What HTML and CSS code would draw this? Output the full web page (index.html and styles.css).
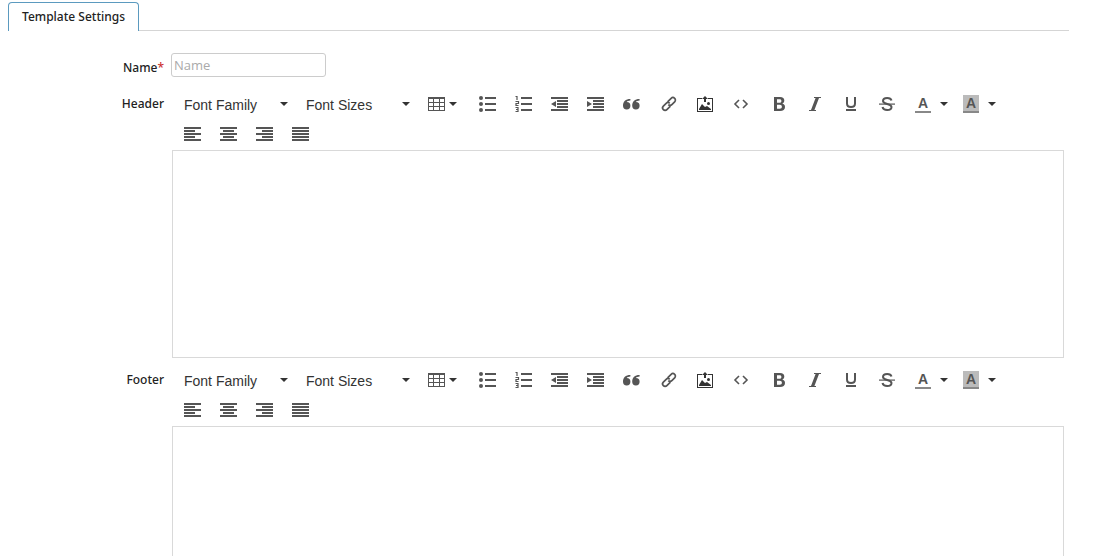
FILE: index.html
```html
<!DOCTYPE html>
<html lang="en">
<head>
    <meta charset="UTF-8">
    <meta name="viewport" content="width=device-width, initial-scale=1.0">
    <title>Template Settings</title>
    <link rel="stylesheet" href="styles.css">
</head>
<body>
    <!-- Toolbar icons -->
    <svg class="sprite" aria-hidden="true">
        <symbol id="i-table" viewBox="0 0 16 16"><path fill-rule="evenodd" d="M0 1h17v14H0zM1 3v3h4V3zm5 0v3h5V3zm6 0v3h4V3zM1 7v3h4V7zm5 0v3h5V7zm6 0v3h4V7zM1 11v3h4v-3zm5 0v3h5v-3zm6 0v3h4v-3z"/></symbol>
        <symbol id="i-bullist" viewBox="0 0 16 16"><circle cx="2" cy="2" r="2"/><circle cx="2" cy="8" r="2"/><circle cx="2" cy="14" r="2"/><path d="M6 1h11v2H6zM6 7h11v2H6zM6 13h11v2H6z"/></symbol>
        <symbol id="i-numlist" viewBox="0 0 16 16"><path d="M6 1h11v2H6zM6 7h11v2H6zM6 13h11v2H6z"/><path d="M.5 .5H2V4M.5 5.500h3v2H1v2h2.500M.5 11.500H3v4H.5M1 13.500h2" fill="none" stroke="currentColor" stroke-width="1.200"/></symbol>
        <symbol id="i-outdent" viewBox="0 0 16 16"><path d="M0 1h17v2H0zM6 4h11v2H6zM6 7h11v2H6zM6 10h11v2H6zM0 13h17v2H0zM5 5v6L0 8z"/></symbol>
        <symbol id="i-indent" viewBox="0 0 16 16"><path d="M0 1h17v2H0zM6 4h11v2H6zM6 7h11v2H6zM6 10h11v2H6zM0 13h17v2H0zM0 5v6l5-3z"/></symbol>
        <symbol id="i-quote" viewBox="0 0 16 16"><path d="M3.700 6A3.700 3.700 0 1 1 0 9.700C0 5.600 2.500 3 7.400 3v1.600C5.400 4.700 4.400 5.200 3.700 6zM12.900 6a3.700 3.700 0 1 1-3.700 3.700C9.200 5.600 11.700 3 16.600 3v1.600c-2 .1-3 .6-3.700 1.400z"/></symbol>
        <symbol id="i-link" viewBox="0 0 16 16"><g fill="none" stroke="currentColor" stroke-width="1.700" transform="rotate(-45 8 8)"><path d="M7.500 10.500h-5a2.500 2.500 0 0 1 0-5h4a2.500 2.500 0 0 1 2.500 2.500"/><path d="M8.500 5.500h5a2.500 2.500 0 0 1 0 5h-4a2.500 2.500 0 0 1-2.500-2.500"/></g></symbol>
        <symbol id="i-image" viewBox="0 0 16 16"><path fill="#333" d="M5 2H0v14h16V2h-5v1h4v12H1V3h4zM8 0L5 3h2v3h2V3h2zM2 14v-1l3-5 3 3 2-1 4 3v1z"/><circle cx="11.500" cy="7.500" r="1.500" fill="#333"/></symbol>
        <symbol id="i-code" viewBox="0 0 16 16"><path d="M6 4L2 8l4 4M10 4l4 4-4 4" fill="none" stroke="currentColor" stroke-width="1.600"/></symbol>
        <symbol id="i-bold" viewBox="0 0 16 16"><path fill-rule="evenodd" d="M3 1h6c3 0 4.300 1.500 4.300 3.500 0 1.500-.8 2.600-2 3.100 1.600.4 2.700 1.500 2.700 3.300C14 13.500 12.200 15 9 15H3zM6 3.200v3.500h2.500c1.300 0 1.900-.6 1.900-1.800s-.6-1.700-1.900-1.700zm0 5.500v4.100h2.700c1.500 0 2.200-.7 2.200-2s-.7-2.100-2.200-2.100z"/></symbol>
        <symbol id="i-italic" viewBox="0 0 16 16"><path d="M14 1v1h-2L7.400 14H9v1H2v-1h2L8.600 2H7V1z"/></symbol>
        <symbol id="i-underline" viewBox="0 0 16 16"><path d="M4 1v6.500C4 9.500 5.500 11 8 11s4-1.500 4-3.500V1" fill="none" stroke="currentColor" stroke-width="2"/><path d="M3 13h10v2H3z"/></symbol>
        <symbol id="i-strike" viewBox="0 0 16 16"><path d="M12.500 4.500C12 2.800 10.500 2 8.200 2 5.600 2 4 3.200 4 5c0 3.500 8.500 2.500 8.500 6 0 1.800-1.700 3-4.300 3-2.500 0-4.200-1-4.700-3" fill="none" stroke="currentColor" stroke-width="2"/><path d="M0 7.500h16v1.200H0z"/></symbol>
        <symbol id="i-left" viewBox="0 0 16 16"><path d="M0 1h17v2H0zM0 4h11v2H0zM0 7h17v2H0zM0 10h11v2H0zM0 13h17v2H0z"/></symbol>
        <symbol id="i-center" viewBox="0 0 16 16"><path d="M0 1h17v2H0zM3 4h11v2H3zM0 7h17v2H0zM3 10h11v2H3zM0 13h17v2H0z"/></symbol>
        <symbol id="i-right" viewBox="0 0 16 16"><path d="M0 1h17v2H0zM6 4h11v2H6zM0 7h17v2H0zM6 10h11v2H6zM0 13h17v2H0z"/></symbol>
        <symbol id="i-justify" viewBox="0 0 16 16"><path d="M0 1h17v2H0zM0 4h17v2H0zM0 7h17v2H0zM0 10h17v2H0zM0 13h17v2H0z"/></symbol>
    </svg>

    <nav class="tabs">
        <a class="tab" href="#settings">Template Settings</a>
    </nav>

    <form class="settings" id="settings">
        <div class="row name-row">
            <label class="row-label" for="name">Name<span class="required">*</span></label>
            <input class="name-input" type="text" id="name" placeholder="Name">
        </div>

        <div class="row">
            <label class="row-label" for="header">Header</label>
            <div class="editor">
                <div class="toolbar"></div>
                <textarea class="content" id="header"></textarea>
            </div>
        </div>

        <div class="row">
            <label class="row-label" for="footer">Footer</label>
            <div class="editor">
                <div class="toolbar"></div>
                <textarea class="content" id="footer"></textarea>
            </div>
        </div>
    </form>

    <script src="editor.js"></script>
</body>
</html>
```
FILE: styles.css
```css
* {
    box-sizing: border-box;
}
body {
    margin: 0 28px 0 8px;
    background: #fff;
    color: #222;
    font-family: "Noto Sans", "Open Sans", sans-serif;
    font-size: 12px;
    line-height: 18px;
}
.sprite {
    display: none;
}
/* Tabs */
.tabs {
    display: flex;
    margin-top: 2px;
    border-bottom: 1px solid #d5d5d5;
}
.tab {
    margin-bottom: -1px;
    padding: 5px 13px;
    border: 1px solid #5b9abf;
    border-bottom: 0;
    border-radius: 4px 4px 0 0;
    background: #fff;
    color: #222;
    font-weight: 500;
    text-decoration: none;
}
/* Form rows */
.settings {
    margin-right: 5px;
    padding-top: 22px;
}
.row {
    display: grid;
    grid-template-columns: 156px minmax(0, 1fr);
    column-gap: 8px;
}
.row-label {
    padding-top: 6px;
    font-weight: 500;
    text-align: right;
}
.required {
    color: #c33;
}
.name-row {
    column-gap: 7px;
    margin-bottom: 12px;
}
.name-input {
    width: 155px;
    height: 24px;
    padding: 0 2px;
    border: 1px solid #ccc;
    border-radius: 3px;
    font-family: "Open Sans", "Noto Sans", sans-serif;
    font-size: 13px;
}
.name-input::placeholder {
    color: #aaa;
}
/* Editor */
.editor {
    margin-bottom: 7px;
}
.toolbar {
    display: flex;
    flex-wrap: wrap;
    column-gap: 2px;
    padding: 0 2px 1px;
}
.group {
    display: flex;
}
.picker {
    display: flex;
    align-items: center;
    width: 122px;
    height: 30px;
}
.picker select {
    flex: 1;
    width: 100%;
    height: 30px;
    margin-right: -20px;
    padding: 2px 20px 0 10px;
    border: 0;
    background: none;
    color: #333;
    font-family: "Liberation Sans", Arial, sans-serif;
    font-size: 14px;
    appearance: none;
}
.btn {
    display: flex;
    align-items: center;
    height: 30px;
    padding: 0 10px;
    border: 0;
    background: none;
    color: #555;
    cursor: pointer;
}
.btn:hover {
    background: #eee;
}
.icon {
    width: 16px;
    height: 16px;
    fill: currentColor;
    overflow: visible;
}
.icon use,
symbol {
    overflow: visible;
}
.caret {
    border: 4px solid transparent;
    border-top-color: #333;
    border-bottom: 0;
    pointer-events: none;
}
.picker .caret {
    margin-right: 8px;
}
.menu .caret {
    margin-left: 5px;
}
.color {
    width: 48px;
    padding-right: 0;
}
.color .caret {
    margin-left: 9px;
}
.letter {
    width: 16px;
    height: 18px;
    border-bottom: 2px solid #888;
    font: bold 14px/16px "Liberation Sans", Arial, sans-serif;
    text-align: center;
}
.backcolor .letter {
    background: #bbb;
}
.content {
    display: block;
    width: 100%;
    height: 208px;
    padding: 8px;
    border: 1px solid #d9d9d9;
    outline: 0;
    resize: none;
}
```
FILE: editor.js
```js
// Each group wraps to the next line as one piece
const groups = [
    ["bullist", "numlist", "outdent", "indent", "quote"],
    ["link", "image", "code"],
    ["bold", "italic", "underline", "strike"],
    ["left", "center", "right", "justify"]
];

const caret = '<span class="caret"></span>';

function icon(name) {
    return `<svg class="icon" aria-hidden="true"><use href="#i-${name}"/></svg>`;
}

function button(name) {
    return `<button class="btn" type="button" aria-label="${name}">${icon(name)}</button>`;
}

function picker(text) {
    return `<div class="picker"><select aria-label="${text}"><option>${text}</option></select>${caret}</div>`;
}

function color(name) {
    return `<button class="btn color ${name}" type="button" aria-label="${name}"><span class="letter">A</span>${caret}</button>`;
}

document.querySelectorAll(".toolbar").forEach((toolbar) => {
    let html = '<div class="group">' + picker("Font Family") + picker("Font Sizes");
    html += `<button class="btn menu" type="button" aria-label="table">${icon("table")}${caret}</button></div>`;
    groups.forEach((names) => {
        html += '<div class="group">' + names.map(button).join("");
        if (names.includes("bold")) {
            html += color("forecolor") + color("backcolor");
        }
        html += "</div>";
    });
    toolbar.innerHTML = html;
});
```
